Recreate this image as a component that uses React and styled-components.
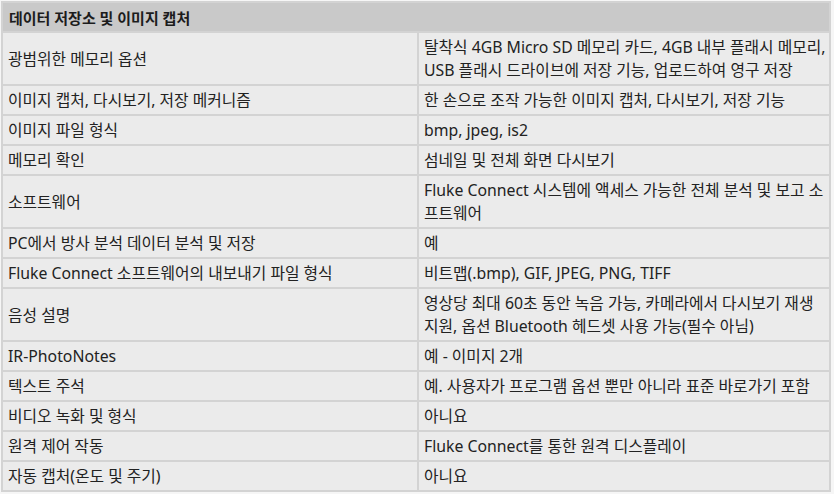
import React from "react";
import styled, { createGlobalStyle } from "styled-components";

const Global = createGlobalStyle`
  html, body { margin: 0; padding: 0; background: #f6f6f6; }
  body { font-family: "Noto Sans", "Noto Sans CJK KR", sans-serif; }
`;

const Table = styled.div`
  margin: 1px;
  width: 830px;
  box-sizing: border-box;
  padding: 2px;
  background: #d3d3d3;
  display: grid;
  grid-template-columns: 414px 1fr;
  gap: 2px;
`;

const Header = styled.div`
  grid-column: 1 / -1;
  background: #c9c9c9;
  height: 28px;
  box-sizing: border-box;
  padding: 0 6px;
  display: flex;
  align-items: center;
  font-weight: 700;
  font-size: 15px;
  color: #1c1c1c;
`;

const Cell = styled.div`
  background: #ebebeb;
  box-sizing: border-box;
  padding: 3px 1px 2px 5px;
  font-size: 15.8px;
  line-height: 23px;
  color: #222;
  display: flex;
  align-items: center;
  min-height: 28px;
`;

const rows = [
  ["광범위한 메모리 옵션", "탈착식 4GB Micro SD 메모리 카드, 4GB 내부 플래시 메모리, USB 플래시 드라이브에 저장 기능, 업로드하여 영구 저장"],
  ["이미지 캡처, 다시보기, 저장 메커니즘", "한 손으로 조작 가능한 이미지 캡처, 다시보기, 저장 기능"],
  ["이미지 파일 형식", "bmp, jpeg, is2"],
  ["메모리 확인", "섬네일 및 전체 화면 다시보기"],
  ["소프트웨어", "Fluke Connect 시스템에 액세스 가능한 전체 분석 및 보고 소프트웨어"],
  ["PC에서 방사 분석 데이터 분석 및 저장", "예"],
  ["Fluke Connect 소프트웨어의 내보내기 파일 형식", "비트맵(.bmp), GIF, JPEG, PNG, TIFF"],
  ["음성 설명", "영상당 최대 60초 동안 녹음 가능, 카메라에서 다시보기 재생 지원, 옵션 Bluetooth 헤드셋 사용 가능(필수 아님)"],
  ["IR-PhotoNotes", "예 - 이미지 2개"],
  ["텍스트 주석", "예. 사용자가 프로그램 옵션 뿐만 아니라 표준 바로가기 포함"],
  ["비디오 녹화 및 형식", "아니요"],
  ["원격 제어 작동", "Fluke Connect를 통한 원격 디스플레이"],
  ["자동 캡처(온도 및 주기)", "아니요"],
];

export default function App() {
  return (
    <>
      <Global />
      <Table>
        <Header>데이터 저장소 및 이미지 캡처</Header>
        {rows.map(([k, v], i) => (
          <React.Fragment key={i}>
            <Cell>{k}</Cell>
            <Cell>{v}</Cell>
          </React.Fragment>
        ))}
      </Table>
    </>
  );
}
